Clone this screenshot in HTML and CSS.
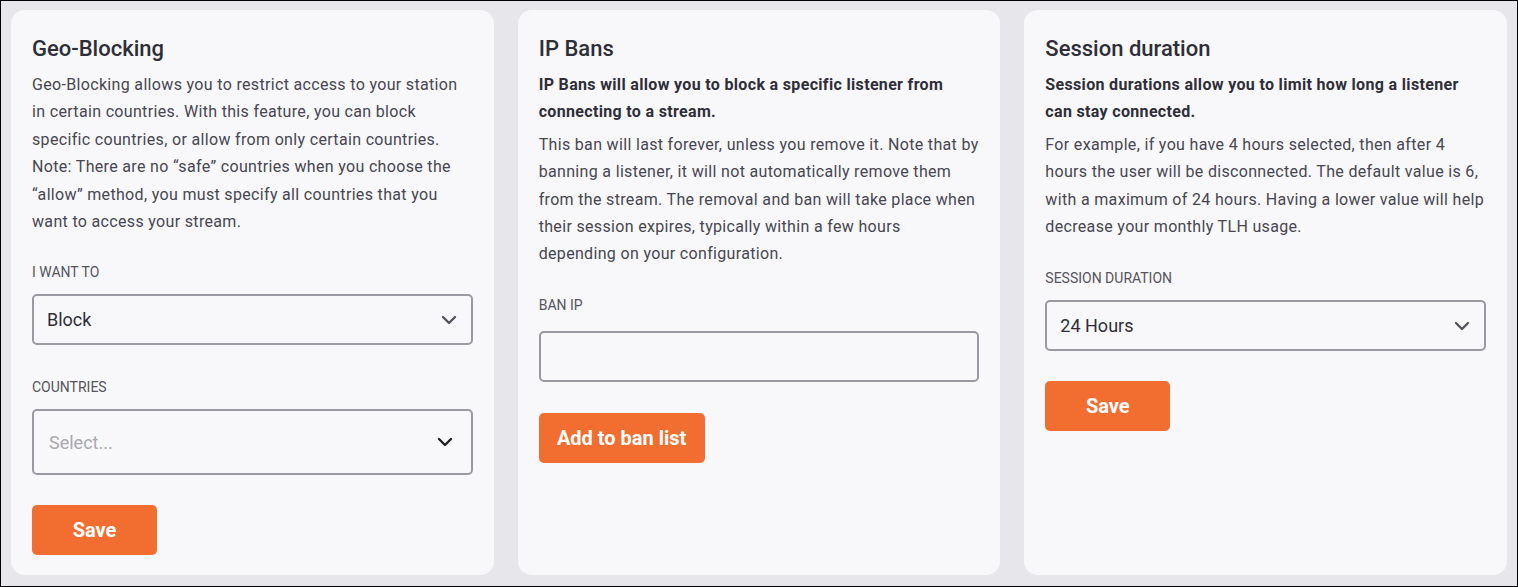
FILE: index.html
```html
<!DOCTYPE html>
<html lang="en">
<head>
<meta charset="utf-8">
<title>Security settings</title>
<link rel="stylesheet" href="styles.css">
</head>
<body>
<div class="frame">
  <section class="card">
    <h2 class="card-title">Geo-Blocking</h2>
    <p class="text">Geo-Blocking allows you to restrict access to your station in certain countries. With this feature, you can block specific countries, or allow from only certain countries. Note: There are no “safe” countries when you choose the “allow” method, you must specify all countries that you want to access your stream.</p>
    <div class="field first-field">
      <label class="label">I want to</label>
      <div class="select">
        <span class="value">Block</span>
        <svg class="chev" width="16" height="10" viewBox="0 0 16 10"><path d="M2 2l6 6 6-6" fill="none" stroke="#55545e" stroke-width="2.4" stroke-linecap="round" stroke-linejoin="round"/></svg>
      </div>
    </div>
    <div class="field">
      <label class="label">Countries</label>
      <div class="select select-tall">
        <span class="placeholder">Select...</span>
        <svg class="chev" width="16" height="10" viewBox="0 0 16 10"><path d="M2 2l6 6 6-6" fill="none" stroke="#1e1e24" stroke-width="2.4" stroke-linecap="round" stroke-linejoin="round"/></svg>
      </div>
    </div>
    <button class="btn btn-save btn-tight">Save</button>
  </section>

  <section class="card">
    <h2 class="card-title">IP Bans</h2>
    <p class="text strong">IP Bans will allow you to block a specific listener from connecting to a stream.</p>
    <p class="text">This ban will last forever, unless you remove it. Note that by banning a listener, it will not automatically remove them from the stream. The removal and ban will take place when their session expires, typically within a few hours depending on your configuration.</p>
    <div class="field first-field">
      <label class="label label-input">Ban IP</label>
      <div class="input"></div>
    </div>
    <button class="btn btn-wide">Add to ban list</button>
  </section>

  <section class="card">
    <h2 class="card-title">Session duration</h2>
    <p class="text strong">Session durations allow you to limit how long a listener can stay connected.</p>
    <p class="text">For example, if you have 4 hours selected, then after 4 hours the user will be disconnected. The default value is 6, with a maximum of 24 hours. Having a lower value will help decrease your monthly TLH usage.</p>
    <div class="field first-field first-field-low">
      <label class="label">Session duration</label>
      <div class="select">
        <span class="value">24 Hours</span>
        <svg class="chev" width="16" height="10" viewBox="0 0 16 10"><path d="M2 2l6 6 6-6" fill="none" stroke="#55545e" stroke-width="2.4" stroke-linecap="round" stroke-linejoin="round"/></svg>
      </div>
    </div>
    <button class="btn btn-save btn-tight">Save</button>
  </section>
</div>
</body>
</html>
```

FILE: styles.css
```css
html, body {
  margin: 0;
  padding: 0;
}
body {
  font-family: Roboto, "Liberation Sans", sans-serif;
  color: #3a3944;
}
.frame {
  box-sizing: border-box;
  width: 1518px;
  height: 587px;
  border: 1px solid #000;
  background: #e7e6ea;
  padding: 9px 10px 11px 10px;
  display: grid;
  grid-template-columns: repeat(3, 1fr);
  column-gap: 24px;
}
.card {
  background: #f8f8fa;
  border-radius: 14px;
  padding: 25px 21px 20px 21px;
  display: flex;
  flex-direction: column;
  align-items: flex-start;
}
.card-title {
  margin: 0;
  font-size: 22px;
  line-height: 28px;
  font-weight: 500;
  color: #2f2e38;
}
.text {
  margin: 8px 0 0 0;
  font-size: 16px;
  line-height: 27.4px;
  letter-spacing: 0.33px;
  color: #474651;
}
.text.strong {
  font-weight: 700;
  color: #2f2e38;
}
.text.strong + .text {
  margin-top: 5px;
}
.field {
  width: 100%;
  margin-top: 33px;
}
.first-field {
  margin-top: 28px;
}
.first-field-low {
  margin-top: 29px;
}
.label {
  display: block;
  font-size: 14px;
  line-height: 18px;
  text-transform: uppercase;
  color: #55545c;
  margin-bottom: 13px;
}
.label-input {
  margin-bottom: 17px;
}
.select, .input {
  box-sizing: border-box;
  width: 100%;
  height: 51px;
  border: 2px solid #9a99a2;
  border-radius: 5px;
  background: #f8f8fa;
  display: flex;
  align-items: center;
  justify-content: space-between;
  padding: 0 14px 0 13px;
}
.select-tall {
  height: 66px;
  padding: 0 18px 0 15px;
}
.value {
  font-size: 18px;
  color: #2f2e38;
}
.placeholder {
  font-size: 18px;
  color: #a9a8ae;
}
.chev {
  display: block;
}
.btn {
  margin-top: 31px;
  border: none;
  border-radius: 5px;
  background: #f26e30;
  color: #fff;
  font-family: Roboto, "Liberation Sans", sans-serif;
  font-weight: 700;
  font-size: 20px;
  height: 50px;
  padding: 0;
}
.btn-tight {
  margin-top: 30px;
}
.btn-save {
  width: 125px;
}
.btn-wide {
  width: 166px;
}
```
